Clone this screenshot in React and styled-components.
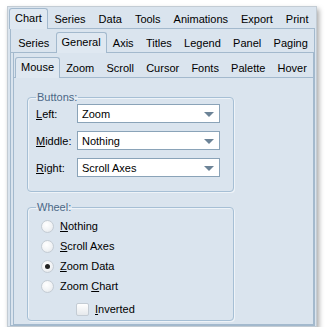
import React from "react";
import styled, { createGlobalStyle } from "styled-components";

const GlobalStyle = createGlobalStyle`
  html, body {
    margin: 0;
    padding: 0;
    background: #ffffff;
  }
  body {
    font-family: "Liberation Sans", Arial, sans-serif;
    font-size: 11px;
    color: #000;
  }
`;

const Window = styled.div`
  margin: 6px 0 0 7px;
  width: 310px;
  height: 321px;
  box-sizing: border-box;
  background: #dae4ee;
  border: 1px solid #c3ccd4;
  box-shadow: 2px 3px 5px rgba(0, 0, 0, 0.35);
  padding: 1px 1px 0 1px;
  display: flex;
  flex-direction: column;
`;

const TabBar = styled.div`
  display: flex;
  align-items: flex-end;
  height: ${(p) => p.$h}px;
  border-bottom: 1px solid #a3b9cd;
  padding-left: ${(p) => p.$indent || 0}px;
  flex-shrink: 0;
`;

const Tab = styled.div`
  flex: 1 1 auto;
  text-align: center;
  white-space: nowrap;
  height: 18px;
  line-height: 18px;
  box-sizing: border-box;
  position: relative;
  margin-bottom: ${(p) => (p.$active ? -1 : 0)}px;
  ${(p) =>
    p.$active &&
    `
    flex: 0 0 auto;
    padding: 0 5px;
    background: #dfe8f1;
    border: 1px solid #a3b9cd;
    border-bottom: none;
    border-radius: 3px 3px 0 0;
    height: 21px;
    line-height: 19px;
  `}
`;

const Page = styled.div`
  flex: 1;
  display: flex;
  flex-direction: column;
  margin-left: ${(p) => p.$ml || 0}px;
  border-left: 1px solid #a3b9cd;
  border-right: 1px solid #a3b9cd;
  border-bottom: 1px solid #a3b9cd;
  min-height: 0;
`;

const Content = styled.div`
  flex: 1;
  padding: 13px 0 0 13px;
  display: flex;
  flex-direction: column;
  gap: 9px;
`;

const Group = styled.fieldset`
  margin: 0;
  width: 207px;
  box-sizing: border-box;
  border: 1px solid #a6bfd5;
  border-radius: 4px;
  box-shadow: inset 1px 1px 0 #eef3f8, 1px 1px 0 #eef3f8;
  padding: ${(p) => p.$pad};
  display: flex;
  flex-direction: column;
  gap: ${(p) => p.$gap}px;
`;

const Legend = styled.legend`
  padding: 0 1px;
  margin-left: ${(p) => p.$offset || 0}px;
  color: #4a6786;
  line-height: 12px;
`;

const Row = styled.div`
  display: flex;
  align-items: center;
  height: 19px;
`;

const Label = styled.span`
  width: 41px;
`;

const Key = styled.span`
  text-decoration: underline;
`;

const Combo = styled.div`
  width: 143px;
  height: 19px;
  box-sizing: border-box;
  background: #fff;
  border: 1px solid #8aa3b8;
  display: flex;
  align-items: center;
  justify-content: space-between;
  padding: 0 5px 0 4px;
`;

const Arrow = styled.span`
  width: 0;
  height: 0;
  border-left: 5px solid transparent;
  border-right: 5px solid transparent;
  border-top: 5px solid #6c8397;
  margin-top: 1px;
`;

const Option = styled.div`
  display: flex;
  align-items: center;
  gap: 6px;
  height: 20px;
  padding-left: ${(p) => p.$indent || 0}px;
  margin-top: ${(p) => p.$mt || 0}px;
`;

const Radio = styled.span`
  width: 13px;
  height: 13px;
  box-sizing: border-box;
  border-radius: 50%;
  border: 1px solid #c4ccd4;
  background: radial-gradient(circle at 40% 35%, #ffffff 0%, #f1f3f5 55%, #dcdfe3 100%);
  display: flex;
  align-items: center;
  justify-content: center;
  &::after {
    content: "";
    width: 5px;
    height: 5px;
    border-radius: 50%;
    background: ${(p) => (p.$on ? "#222" : "transparent")};
  }
`;

const Check = styled.span`
  width: 13px;
  height: 13px;
  box-sizing: border-box;
  border-radius: 2px;
  border: 1px solid #c4ccd4;
  background: linear-gradient(#ffffff, #e6e9ec);
`;

const tabs1 = ["Chart", "Series", "Data", "Tools", "Animations", "Export", "Print"];
const tabs2 = ["Series", "General", "Axis", "Titles", "Legend", "Panel", "Paging"];
const tabs3 = ["Mouse", "Zoom", "Scroll", "Cursor", "Fonts", "Palette", "Hover"];

const Tabs = ({ items, active, h, indent }) => (
  <TabBar $h={h} $indent={indent}>
    {items.map((t) => (
      <Tab key={t} $active={t === active}>
        {t}
      </Tab>
    ))}
  </TabBar>
);

const buttons = [
  ["L", "eft:", "Zoom"],
  ["M", "iddle:", "Nothing"],
  ["R", "ight:", "Scroll Axes"],
];

export default function App() {
  return (
    <>
      <GlobalStyle />
      <Window>
        <Tabs items={tabs1} active="Chart" h={20} />
        <Page $ml={1}>
          <Tabs items={tabs2} active="General" h={23} indent={1} />
          <Page $ml={2}>
            <Tabs items={tabs3} active="Mouse" h={24} indent={1} />
            <Content>
              <Group $pad="1px 0 14px 8px" $gap={8}>
                <Legend>Buttons:</Legend>
                {buttons.map(([k, rest, val]) => (
                  <Row key={k}>
                    <Label>
                      <Key>{k}</Key>
                      {rest}
                    </Label>
                    <Combo>
                      <span>{val}</span>
                      <Arrow />
                    </Combo>
                  </Row>
                ))}
              </Group>
              <Group $pad="3px 0 1px 13px" $gap={0}>
                <Legend $offset={-5}>Wheel:</Legend>
                <Option>
                  <Radio />
                  <span>
                    <Key>N</Key>othing
                  </span>
                </Option>
                <Option>
                  <Radio />
                  <span>
                    <Key>S</Key>croll Axes
                  </span>
                </Option>
                <Option>
                  <Radio $on />
                  <span>
                    <Key>Z</Key>oom Data
                  </span>
                </Option>
                <Option>
                  <Radio />
                  <span>
                    Zoom <Key>C</Key>hart
                  </span>
                </Option>
                <Option $indent={35} $mt={3}>
                  <Check />
                  <span>
                    <Key>I</Key>nverted
                  </span>
                </Option>
              </Group>
            </Content>
          </Page>
        </Page>
      </Window>
    </>
  );
}
